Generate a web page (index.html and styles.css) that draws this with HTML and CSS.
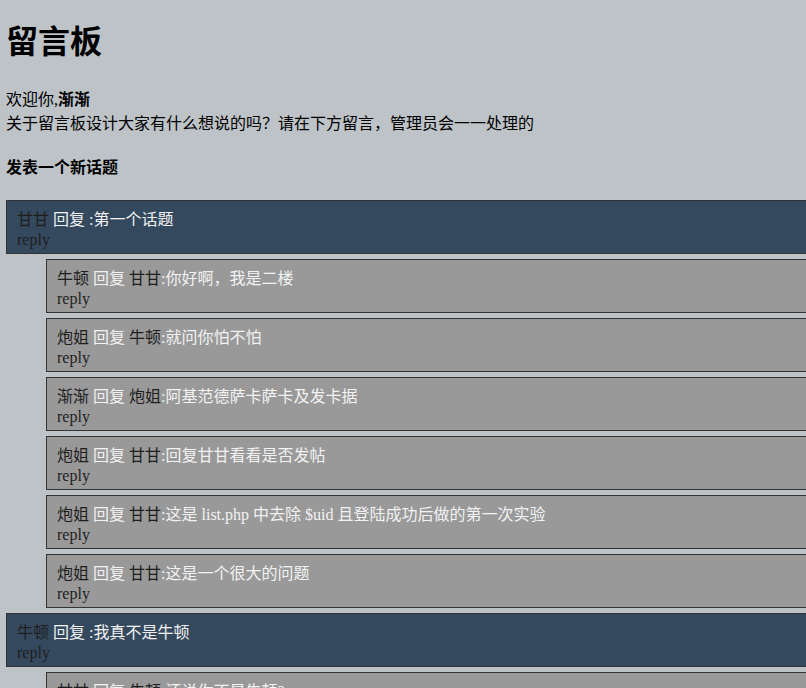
FILE: index.html
```html
<!DOCTYPE html>
<html lang="zh-CN">
<head>
  <meta charset="UTF-8">
  <title>留言板</title>
  <link rel="stylesheet" href="styles.css">
</head>
<body>
  <h1>留言板</h1>
  <p class="welcome">
    欢迎你,<b>渐渐</b><br>
    关于留言板设计大家有什么想说的吗？请在下方留言，管理员会一一处理的
  </p>
  <h4>发表一个新话题</h4>

  <div class="topic">
    <span class="name">甘甘</span> 回复 <span class="name"></span>:第一个话题<br>
    <a class="reply">reply</a>
  </div>
  <div class="sub">
    <span class="name">牛顿</span> 回复 <span class="name">甘甘</span>:你好啊，我是二楼<br>
    <a class="reply">reply</a>
  </div>
  <div class="sub">
    <span class="name">炮姐</span> 回复 <span class="name">牛顿</span>:就问你怕不怕<br>
    <a class="reply">reply</a>
  </div>
  <div class="sub">
    <span class="name">渐渐</span> 回复 <span class="name">炮姐</span>:阿基范德萨卡萨卡及发卡据<br>
    <a class="reply">reply</a>
  </div>
  <div class="sub">
    <span class="name">炮姐</span> 回复 <span class="name">甘甘</span>:回复甘甘看看是否发帖<br>
    <a class="reply">reply</a>
  </div>
  <div class="sub">
    <span class="name">炮姐</span> 回复 <span class="name">甘甘</span>:这是 list.php 中去除 $uid 且登陆成功后做的第一次实验<br>
    <a class="reply">reply</a>
  </div>
  <div class="sub">
    <span class="name">炮姐</span> 回复 <span class="name">甘甘</span>:这是一个很大的问题<br>
    <a class="reply">reply</a>
  </div>

  <div class="topic">
    <span class="name">牛顿</span> 回复 <span class="name"></span>:我真不是牛顿<br>
    <a class="reply">reply</a>
  </div>
  <div class="sub">
    <span class="name">甘甘</span> 回复 <span class="name">牛顿</span>:还说你不是牛顿?<br>
    <a class="reply">reply</a>
  </div>
</body>
</html>
```

FILE: styles.css
```css
body {
  margin: 0;
  padding: 0 6px;
  background: #bdc3c7;
  color: #000;
  font-family: "Liberation Serif", "Noto Sans CJK SC", serif;
  font-size: 16px;
}
h1 { font-size: 2em; margin: 16px 0 24px; }
p.welcome { margin: 0; }
h4 { margin: 20px 0 22px; }

.topic, .sub {
  padding: 9px 10px 3px;
  margin: 5px -40px 5px 0;
  border: 1px solid #333;
  color: #f2f2f2;
  line-height: 20px;
}
.topic { background: #34495e; }
.sub { background: #999; margin-left: 40px; }

.name { color: #1e1e1e; }
.reply { color: #1e1e1e; }
```
